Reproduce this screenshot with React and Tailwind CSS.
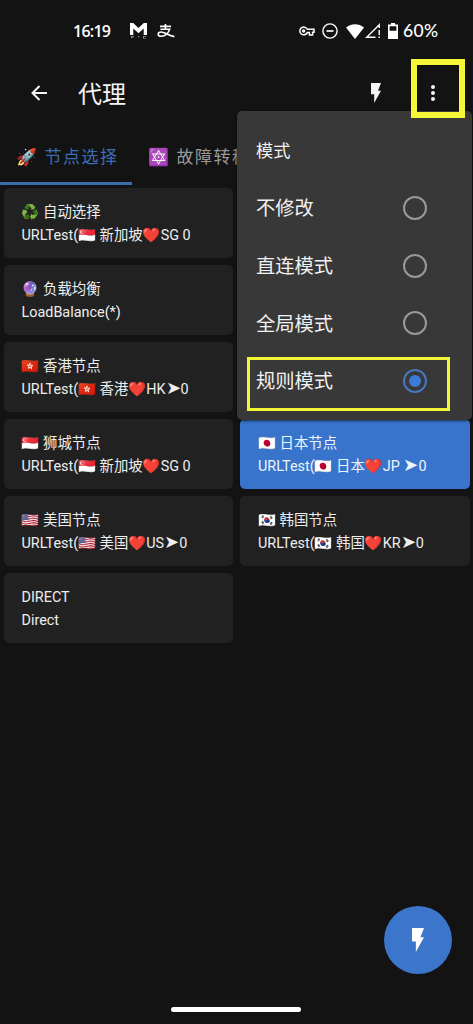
import React from "react";

const LEFT = [
  ["♻️ 自动选择", "URLTest(🇸🇬 新加坡❤️SG 0"],
  ["🔮 负载均衡", "LoadBalance(*)"],
  ["🇭🇰 香港节点", "URLTest(🇭🇰 香港❤️HK➤0"],
  ["🇸🇬 狮城节点", "URLTest(🇸🇬 新加坡❤️SG 0"],
  ["🇺🇸 美国节点", "URLTest(🇺🇸 美国❤️US➤0"],
  ["DIRECT", "Direct"],
];

const RIGHT = [
  ["🇯🇵 日本节点", "URLTest(🇯🇵 日本❤️JP ➤0", true],
  ["🇰🇷 韩国节点", "URLTest(🇰🇷 韩国❤️KR➤0", false],
];

const MODES = ["不修改", "直连模式", "全局模式", "规则模式"];

function Card({ title, detail, active }) {
  const [before, after] = detail.split("➤");
  return (
    <div
      className={
        "flex h-[70px] flex-col justify-center rounded-[5px] pt-[2px] pl-[18px] text-[14.4px] leading-[23.5px] whitespace-nowrap " +
        (active ? "bg-[#3874cb] text-[#eef4fc]" : "bg-[#212121] text-[#eeeeee]")
      }
    >
      <div className="h-[23.5px]">{title}</div>
      <div className="h-[23.5px]">
        {before}
        {after !== undefined && <span className="text-[18px] leading-none">➤</span>}
        {after}
      </div>
    </div>
  );
}

function Bolt({ className }) {
  return (
    <svg viewBox="0 0 10 20" className={className} fill="currentColor">
      <path d="M0 0h10L7 7.8h3L3.2 20v-8.8H0z" />
    </svg>
  );
}

function StatusBar() {
  return (
    <div className="flex h-[62px] items-center pl-[73px] text-white">
      <div className="w-[57px] text-[16px] font-semibold font-['Open_Sans','Roboto',sans-serif] tracking-[-0.75px]">16:19</div>
      <svg viewBox="0 0 17 16" className="h-4 w-[17px]" fill="currentColor">
        <path d="M0 12V0h3.2l5.3 5 5.3-5H17v12h-3.3V5.4l-5.2 4.8-5.2-4.8V12z" />
        <path d="M1 13.2h3v1H2v1H1zM7.8 13.2h1.5v1H7.8zM13 13.2h3v.8h-2v1h2v.6h-3z" opacity=".6" />
      </svg>
      <svg viewBox="0 0 18 16" className="ml-[10px] h-4 w-[18px]" fill="none" stroke="currentColor" strokeWidth="1.6">
        <path d="M3 3.4h11M8.4 1v5.2M3.4 6.3h9.3c-1.2 3.4-4.4 7-8.4 7C.2 13.3.2 9 4.1 9c3.7 0 7 3.6 13.3 4.6" />
      </svg>
      <svg viewBox="0 0 16 10" className="ml-[124px] h-[10px] w-4" fill="none" stroke="currentColor" strokeWidth="1.5">
        <path d="M8.3 3.3H15v3h-1.4V9h-3.2V6.6H8.3A3.9 3.9 0 1 1 8.3 3.3Z" />
        <circle cx="4.6" cy="5" r="1" />
      </svg>
      <svg viewBox="0 0 16 16" className="ml-[7px] h-4 w-4" fill="none" stroke="currentColor" strokeWidth="1.4">
        <circle cx="8" cy="8" r="7.1" />
        <path d="M4.5 8h7" strokeWidth="1.7" />
      </svg>
      <svg viewBox="0 0 18 15" className="ml-2 h-[15px] w-[18px]" fill="currentColor">
        <path d="M0 3.5C5-1 13-1 18 3.5L9 15z" />
      </svg>
      <svg viewBox="0 0 16 16" className="ml-[1px] h-4 w-4" fill="none" stroke="currentColor" strokeWidth="1.4">
        <path d="M10.5 14.3H1.7L14.3 1.7v3.3M14.2 7v5M14.2 13.6V15" />
      </svg>
      <svg viewBox="0 0 10 16" className="ml-[7px] h-4 w-[10px]" fill="currentColor">
        <path fillRule="evenodd" d="M3 0h4v1.5h3V16H0V1.5h3zM1.6 3.2v4.6h6.8V3.2z" />
      </svg>
      <div className="ml-[5px] text-[17.5px] font-medium font-['Lato','Roboto',sans-serif] tracking-[0.3px]">60%</div>
    </div>
  );
}

function ModeMenu() {
  return (
    <div className="absolute top-[111px] left-[237px] h-[309px] w-[235px] rounded-[5px] bg-[#383838] text-[#f2f2f2] shadow-sm shadow-black/50">
      <div className="flex h-[68px] items-center pt-[13px] pl-[19px] text-[17.2px]">模式</div>
      {MODES.map((name, i) => (
        <div key={name} className="flex h-[57.8px] items-center justify-between pr-[45px] pl-[19px] text-[19.3px]">
          <span className="pt-[3px]">{name}</span>
          {i === 3 ? (
            <span className="flex size-6 items-center justify-center rounded-full border-2 border-[#4778bd]">
              <span className="size-3 rounded-full bg-[#3b7ad5]" />
            </span>
          ) : (
            <span className="size-6 rounded-full border-2 border-[#999999]" />
          )}
        </div>
      ))}
    </div>
  );
}

export default function App() {
  return (
    <div className="relative flex h-[1024px] w-[473px] flex-col overflow-hidden bg-[#131313] font-['Roboto','Noto_Sans_CJK_SC','Noto_Color_Emoji',sans-serif]">
      <StatusBar />
      <header className="flex h-[62px] items-center text-[#f4f4f4]">
        <svg viewBox="0 0 16 16" className="ml-[31px] h-4 w-4" fill="none" stroke="currentColor" strokeWidth="2">
          <path d="M16 8H1.6M8.5 1 1.5 8l7 7" />
        </svg>
        <h1 className="ml-[31px] w-[293px] pt-[3px] text-[24px] leading-none">代理</h1>
        <Bolt className="h-5 w-[10px]" />
        <svg viewBox="0 0 4 16" className="ml-[50px] h-4 w-1" fill="currentColor">
          <circle cx="2" cy="2" r="2" />
          <circle cx="2" cy="8" r="2" />
          <circle cx="2" cy="14" r="2" />
        </svg>
      </header>
      <nav className="flex h-[61px] shrink-0 text-[17px] tracking-[1.5px] whitespace-nowrap">
        <div className="flex w-[132px] items-center border-b-3 border-[#3c6dab] pt-[9px] pl-4 text-[#3b6cb5]">🚀 节点选择</div>
        <div className="flex w-[132px] items-center pt-[6px] pl-4 text-[#9a9a9a]">🔯 故障转移</div>
      </nav>
      <main className="flex gap-[7px] px-[3.5px] pt-[3px]">
        <div className="flex w-[229.5px] flex-col gap-[7px]">
          {LEFT.map(([title, detail]) => (
            <Card key={title} title={title} detail={detail} />
          ))}
        </div>
        <div className="flex w-[229.5px] flex-col gap-[7px] pt-[231px]">
          {RIGHT.map(([title, detail, active]) => (
            <Card key={title} title={title} detail={detail} active={active} />
          ))}
        </div>
      </main>
      <ModeMenu />
      <div className="absolute top-[59px] left-[411px] h-[59px] w-[54px] border-[6px] border-[#f6f637]" />
      <div className="absolute top-[357px] left-[247px] h-[54px] w-[203px] border-[3.5px] border-[#f2f536]" />
      <button className="absolute top-[906px] left-[384px] flex size-[68px] items-center justify-center rounded-full bg-[#3b76cb] text-white">
        <Bolt className="h-6 w-3" />
      </button>
      <div className="absolute bottom-[12px] left-[171px] h-[5px] w-[130px] rounded-full bg-white" />
    </div>
  );
}
